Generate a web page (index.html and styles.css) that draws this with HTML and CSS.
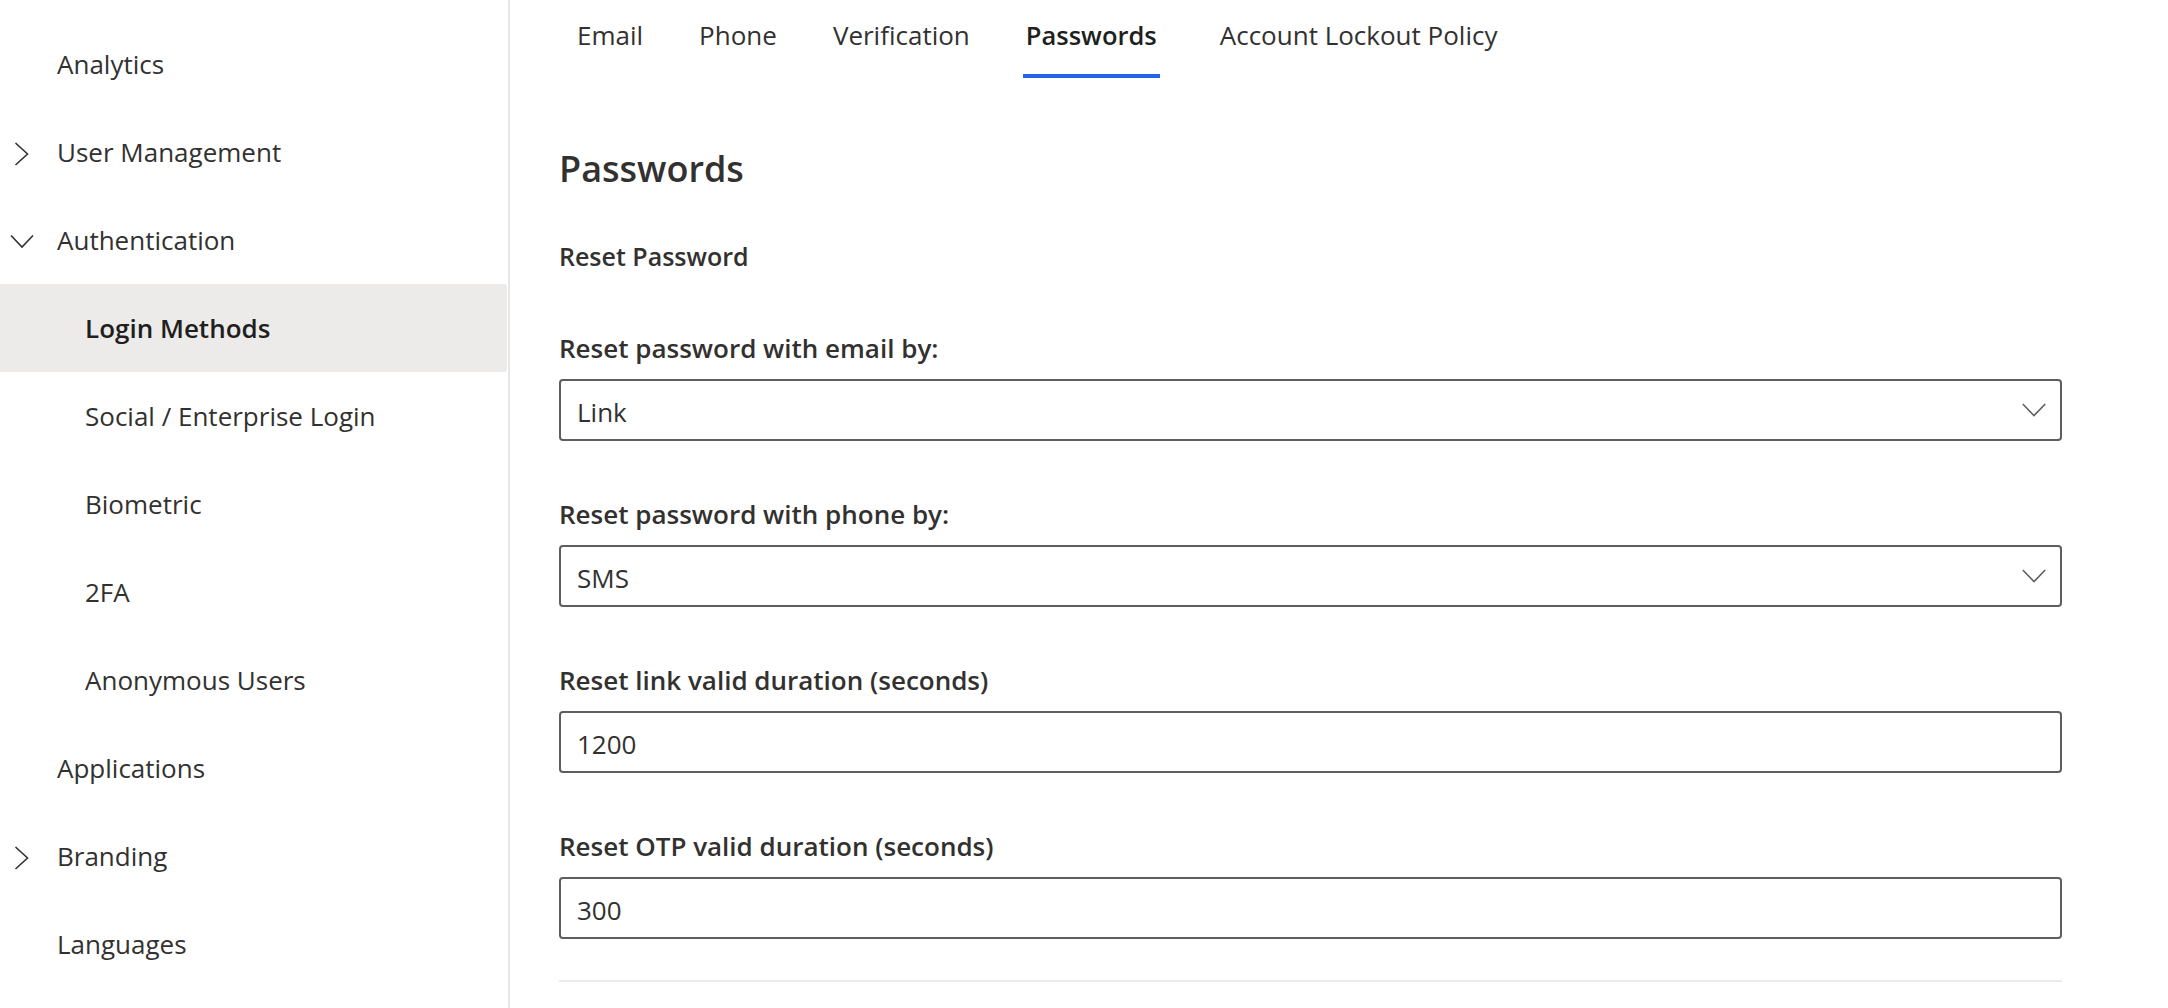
FILE: index.html
```html
<!DOCTYPE html>
<html lang="en">
<head>
<meta charset="utf-8">
<title>Login Methods - Passwords</title>
<link rel="stylesheet" href="styles.css">
</head>
<body>
<div class="app">
  <nav class="sidebar">
    <div class="nav-item"><span class="nav-icon"></span><span class="nav-label">Analytics</span></div>
    <div class="nav-item"><span class="nav-icon"><svg width="24" height="24" viewBox="0 0 24 24"><path d="M5.5 1 L17.5 12 L5.5 23" /></svg></span><span class="nav-label">User Management</span></div>
    <div class="nav-item"><span class="nav-icon"><svg width="24" height="24" viewBox="0 0 24 24"><path d="M1 5.5 L12 17 L23 5.5" /></svg></span><span class="nav-label">Authentication</span></div>
    <div class="nav-item sub selected"><span class="nav-icon"></span><span class="nav-label">Login Methods</span></div>
    <div class="nav-item sub"><span class="nav-icon"></span><span class="nav-label">Social / Enterprise Login</span></div>
    <div class="nav-item sub"><span class="nav-icon"></span><span class="nav-label">Biometric</span></div>
    <div class="nav-item sub"><span class="nav-icon"></span><span class="nav-label">2FA</span></div>
    <div class="nav-item sub"><span class="nav-icon"></span><span class="nav-label">Anonymous Users</span></div>
    <div class="nav-item"><span class="nav-icon"></span><span class="nav-label">Applications</span></div>
    <div class="nav-item"><span class="nav-icon"><svg width="24" height="24" viewBox="0 0 24 24"><path d="M5.5 1 L17.5 12 L5.5 23" /></svg></span><span class="nav-label">Branding</span></div>
    <div class="nav-item"><span class="nav-icon"></span><span class="nav-label">Languages</span></div>
  </nav>
  <main class="main">
    <div class="tabs">
      <div class="tab">Email</div>
      <div class="tab">Phone</div>
      <div class="tab">Verification</div>
      <div class="tab active">Passwords</div>
      <div class="tab">Account Lockout Policy</div>
    </div>
    <div class="content">
      <h1 class="page-title">Passwords</h1>
      <h2 class="section-title">Reset Password</h2>
      <div class="field">
        <div class="field-label">Reset password with email by:</div>
        <div class="control select"><span class="control-text">Link</span><svg class="caret" width="24" height="14" viewBox="0 0 24 14"><path d="M0.8 1 L12 12.6 L23.2 1" /></svg></div>
      </div>
      <div class="field">
        <div class="field-label">Reset password with phone by:</div>
        <div class="control select"><span class="control-text">SMS</span><svg class="caret" width="24" height="14" viewBox="0 0 24 14"><path d="M0.8 1 L12 12.6 L23.2 1" /></svg></div>
      </div>
      <div class="field">
        <div class="field-label">Reset link valid duration (seconds)</div>
        <div class="control"><span class="control-text">1200</span></div>
      </div>
      <div class="field field-last">
        <div class="field-label">Reset OTP valid duration (seconds)</div>
        <div class="control"><span class="control-text">300</span></div>
      </div>
      <div class="divider"></div>
    </div>
  </main>
</div>
</body>
</html>
```
FILE: styles.css
```css
* { box-sizing: border-box; }

html, body {
  margin: 0;
  padding: 0;
  background: #ffffff;
  overflow: hidden;
}

body {
  font-family: "Open Sans", "Noto Sans", sans-serif;
  color: #323130;
}

.app {
  display: flex;
  height: 1008px;
}

.sidebar {
  width: 510px;
  flex: none;
  border-right: 2px solid #e6e6e6;
  padding-top: 20px;
}

.nav-item {
  display: flex;
  align-items: center;
  height: 88px;
  margin-right: 1px;
  font-size: 26px;
  line-height: 88px;
  color: #323130;
  white-space: nowrap;
}

.nav-item.sub {
  padding-left: 28px;
}

.nav-item.selected {
  background: #edebe9;
  border-radius: 0 3px 3px 0;
  font-weight: 600;
  color: #201f1e;
}

.nav-icon {
  width: 57px;
  flex: none;
  display: flex;
  align-items: center;
  height: 88px;
}

.nav-icon svg {
  margin-left: 10px;
  margin-top: 4px;
  fill: none;
  stroke: #323130;
  stroke-width: 1.6;
}

.main {
  flex: 1;
  padding-left: 49px;
  padding-right: 106px;
}

.tabs {
  display: flex;
  gap: 50px;
  margin-left: 15px;
  height: 78px;
}

.tab {
  position: relative;
  padding: 0 3px 8px;
  font-size: 26px;
  line-height: 70px;
  color: #323130;
  white-space: nowrap;
}

.tab.active {
  font-weight: 600;
  font-size: 25.5px;
  color: #201f1e;
  margin-right: 7px;
}

.tab.active::after {
  content: "";
  position: absolute;
  left: 0;
  right: 0;
  bottom: 0;
  height: 4px;
  background: #2563eb;
}

.content {
  padding-top: 66px;
}

.page-title {
  margin: 0;
  font-size: 36px;
  line-height: 49px;
  font-weight: 600;
  color: #323130;
}

.section-title {
  margin: 46px 0 57px;
  font-size: 25px;
  line-height: 34px;
  font-weight: 600;
  color: #323130;
}

.field {
  margin-bottom: 55px;
}

.field.field-last {
  margin-bottom: 41px;
}

.field-label {
  font-size: 26px;
  line-height: 36px;
  font-weight: 600;
  margin-bottom: 13px;
  color: #323130;
}

.control {
  display: flex;
  align-items: center;
  justify-content: space-between;
  height: 62px;
  border: 2px solid #605e5c;
  border-radius: 4px;
  padding: 3px 14px 0 16px;
}

.control-text {
  font-size: 26px;
  line-height: 36px;
  color: #323130;
}

.caret {
  margin-top: -3px;
  fill: none;
  stroke: #605e5c;
  stroke-width: 1.6;
}

.divider {
  height: 2px;
  background: #edebe9;
}
```
